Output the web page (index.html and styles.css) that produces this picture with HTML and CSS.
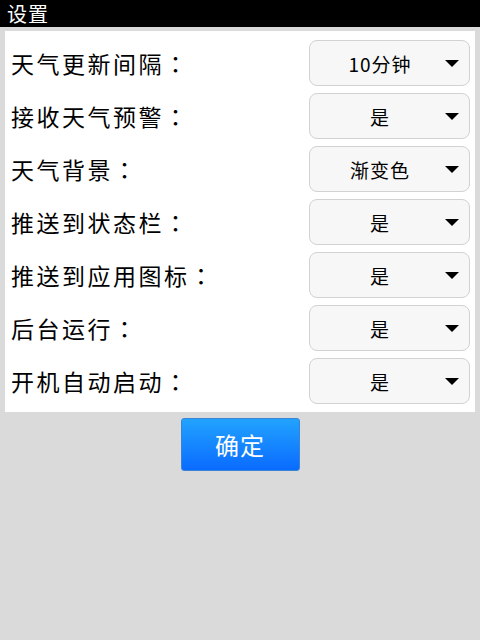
FILE: index.html
```html
<!DOCTYPE html>
<html lang="zh-CN">
  <head>
    <meta charset="UTF-8" />
    <meta name="viewport" content="width=device-width, initial-scale=1.0" />
    <title>设置</title>
    <link rel="stylesheet" href="styles.css">
  </head>
  <body>
    <!-- Title Bar -->
    <div class="title-bar">设置</div>

    <!-- Settings List -->
    <div class="settings">
      <div class="row">
        <span class="label">天气更新间隔<span class="colon" lang="zh-TW">：</span></span>
        <div class="select"><span class="value">10分钟</span><span class="arrow"></span></div>
      </div>
      <div class="row">
        <span class="label">接收天气预警<span class="colon" lang="zh-TW">：</span></span>
        <div class="select"><span class="value">是</span><span class="arrow"></span></div>
      </div>
      <div class="row">
        <span class="label">天气背景<span class="colon" lang="zh-TW">：</span></span>
        <div class="select"><span class="value">渐变色</span><span class="arrow"></span></div>
      </div>
      <div class="row">
        <span class="label">推送到状态栏<span class="colon" lang="zh-TW">：</span></span>
        <div class="select"><span class="value">是</span><span class="arrow"></span></div>
      </div>
      <div class="row">
        <span class="label">推送到应用图标<span class="colon" lang="zh-TW">：</span></span>
        <div class="select"><span class="value">是</span><span class="arrow"></span></div>
      </div>
      <div class="row">
        <span class="label">后台运行<span class="colon" lang="zh-TW">：</span></span>
        <div class="select"><span class="value">是</span><span class="arrow"></span></div>
      </div>
      <div class="row">
        <span class="label">开机自动启动<span class="colon" lang="zh-TW">：</span></span>
        <div class="select"><span class="value">是</span><span class="arrow"></span></div>
      </div>
    </div>

    <!-- Confirm Button -->
    <div class="actions">
      <button type="button" class="confirm">确定</button>
    </div>
  </body>
</html>
```

FILE: styles.css
```css
body {
  margin: 0;
  height: 640px;
  background-color: #dadada;
  font-family: "Noto Sans CJK SC", "DejaVu Sans", sans-serif;
  color: #000000;
}
.title-bar {
  height: 27px;
  padding-left: 7px;
  background-color: #000000;
  color: #ffffff;
  font-size: 20px;
  line-height: 27px;
  letter-spacing: 1px;
}
.settings {
  display: flex;
  flex-direction: column;
  row-gap: 7px;
  margin: 4px 5px 0;
  padding: 9px 5px 8px;
  background-color: #ffffff;
}
.row {
  display: flex;
  align-items: center;
  justify-content: space-between;
  height: 46px;
}
.label {
  padding-left: 1px;
  font-size: 23px;
  letter-spacing: 2.5px;
  line-height: 46px;
}
.label .colon {
  font-family: "Noto Sans CJK TC", sans-serif;
}
.select {
  display: flex;
  align-items: center;
  box-sizing: border-box;
  width: 161px;
  height: 46px;
  padding: 0 10px 0 15px;
  border: 1px solid #d2d2d2;
  border-radius: 8px;
  background-color: #f7f7f7;
}
.select .value {
  flex: 1;
  text-align: center;
  font-size: 19px;
  letter-spacing: 1px;
}
.select .arrow {
  width: 0;
  height: 0;
  margin-left: 10px;
  border-left: 7px solid transparent;
  border-right: 7px solid transparent;
  border-top: 7px solid #000000;
}
.actions {
  display: flex;
  justify-content: center;
  padding-top: 6px;
}
.confirm {
  width: 119px;
  height: 53px;
  padding: 0;
  border: 1px solid #3a84d6;
  border-radius: 3px;
  background: linear-gradient(#22a3ff, #0a6bff);
  color: #ffffff;
  font-family: "Noto Sans CJK SC", sans-serif;
  font-size: 24px;
  letter-spacing: 1px;
}
```
